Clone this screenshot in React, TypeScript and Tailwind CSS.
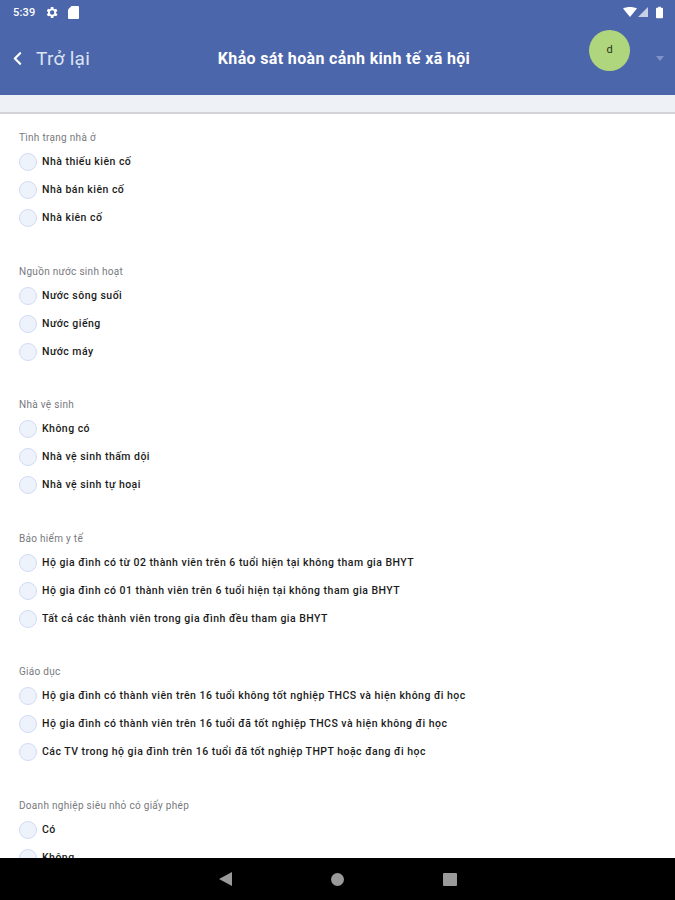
import { ChevronLeft } from 'lucide-react';

const SECTIONS = [
  { title: 'Tình trạng nhà ở', options: ['Nhà thiếu kiên cố', 'Nhà bán kiên cố', 'Nhà kiên cố'] },
  { title: 'Nguồn nước sinh hoạt', options: ['Nước sông suối', 'Nước giếng', 'Nước máy'] },
  { title: 'Nhà vệ sinh', options: ['Không có', 'Nhà vệ sinh thấm dội', 'Nhà vệ sinh tự hoại'] },
  {
    title: 'Bảo hiểm y tế',
    options: [
      'Hộ gia đình có từ 02 thành viên trên 6 tuổi hiện tại không tham gia BHYT',
      'Hộ gia đình có 01 thành viên trên 6 tuổi hiện tại không tham gia BHYT',
      'Tất cả các thành viên trong gia đình đều tham gia BHYT',
    ],
  },
  {
    title: 'Giáo dục',
    options: [
      'Hộ gia đình có thành viên trên 16 tuổi không tốt nghiệp THCS và hiện không đi học',
      'Hộ gia đình có thành viên trên 16 tuổi đã tốt nghiệp THCS và hiện không đi học',
      'Các TV trong hộ gia đình trên 16 tuổi đã tốt nghiệp THPT hoặc đang đi học',
    ],
  },
  { title: 'Doanh nghiệp siêu nhỏ có giấy phép', options: ['Có', 'Không'] },
];

function StatusBar() {
  return (
    <div className="flex h-6 items-center justify-between pl-[13px] pr-[12px] text-white">
      <div className="flex items-center gap-[9px]">
        <span className="text-[11px] font-medium leading-none tracking-[0.2px]">5:39</span>
        <svg width="15" height="15" viewBox="0 0 24 24" fill="currentColor">
          <path
            fillRule="evenodd"
            d="M19.4 13a7.5 7.5 0 0 0 0-2l2.100-1.600-2-3.500-2.500 1a7.600 7.600 0 0 0-1.700-1L15 3.200h-4l-.4 2.700a7.600 7.600 0 0 0-1.700 1l-2.500-1-2 3.500L6.500 11a7.500 7.500 0 0 0 0 2l-2.100 1.600 2 3.500 2.500-1a7.600 7.600 0 0 0 1.700 1l.4 2.700h4l.4-2.700a7.600 7.600 0 0 0 1.700-1l2.500 1 2-3.500zM13 15.500a3.500 3.500 0 1 1 0-7 3.500 3.500 0 0 1 0 7z"
          />
        </svg>
        <svg width="11" height="13" viewBox="0 0 11 13" fill="currentColor">
          <path d="M3.500 0H10a1 1 0 0 1 1 1v11a1 1 0 0 1-1 1H1a1 1 0 0 1-1-1V3.500z" />
        </svg>
      </div>
      <div className="flex items-center gap-[8px]">
        <div className="flex items-end gap-[1px]">
          <svg width="14" height="10" viewBox="0 0 14 10" fill="currentColor">
            <path d="M0 1.500C4 -0.500 10 -0.500 14 1.500L7 10z" />
          </svg>
          <svg width="10" height="10" viewBox="0 0 10 10" fill="currentColor" fillOpacity="0.7">
            <path d="M10 0v10H0z" />
          </svg>
        </div>
        <svg width="7" height="13" viewBox="0 0 8 13" fill="currentColor">
          <path d="M2.500 0h3v1.200h1.500a1 1 0 0 1 1 1V12a1 1 0 0 1-1 1H1a1 1 0 0 1-1-1V2.200a1 1 0 0 1 1-1h1.500z" />
        </svg>
      </div>
    </div>
  );
}

function Header() {
  return (
    <header className="h-[95px] shrink-0 bg-[#4c66ab]">
      <StatusBar />
      <div className="flex h-[69px] items-center pl-[7px] pr-[11px]">
        <div className="flex w-[197px] items-center gap-[8px]">
          <ChevronLeft size={21} strokeWidth={2.6} className="text-white" />
          <span className="text-[19px] leading-none tracking-[0.3px] text-[#dbe3f4]">Trở lại</span>
        </div>
        <h1 className="w-[280px] text-center text-[16px] font-bold leading-none tracking-[0.35px] text-white">
          Khảo sát hoàn cảnh kinh tế xã hội
        </h1>
        <div className="ml-auto flex items-center gap-[26px]">
          <div className="-mt-[16px] flex h-[41px] w-[41px] items-center justify-center rounded-full bg-[#afd67c] text-[11px] text-[#26331a]">
            d
          </div>
          <div className="h-0 w-0 border-x-[4px] border-t-[5px] border-x-transparent border-t-[#7f94c6]" />
        </div>
      </div>
    </header>
  );
}

function Section({ title, options }: { title: string; options: string[] }) {
  return (
    <section className="mb-[37.6px]">
      <p className="mb-[8px] h-[14px] text-[10px] leading-[14px] tracking-[0.3px] text-[#77797d]">{title}</p>
      <div className="flex flex-col gap-[10px]">
        {options.map((option) => (
          <label key={option} className="flex h-[18px] items-start gap-[5px]">
            <span className="h-[18px] w-[18px] shrink-0 rounded-full border border-[#cfdcf5] bg-[#eef2fa]" />
            <span className="mt-[2px] text-[10.5px] font-medium leading-[14px] tracking-[0.47px] text-[#1b1b1b]">{option}</span>
          </label>
        ))}
      </div>
    </section>
  );
}

function NavBar() {
  return (
    <nav className="flex h-[42px] shrink-0 items-center justify-center gap-[99px] bg-black">
      <div className="h-0 w-0 border-y-[7.5px] border-r-[13px] border-y-transparent border-r-[#9a9a9a]" />
      <div className="h-[13px] w-[13px] rounded-full bg-[#9a9a9a]" />
      <div className="h-[13px] w-[14px] rounded-[1px] bg-[#9a9a9a]" />
    </nav>
  );
}

export default function App() {
  return (
    <div className="flex h-[900px] w-[675px] flex-col overflow-hidden bg-white font-['Roboto',sans-serif]">
      <Header />
      <div className="h-[19px] shrink-0 border-b-2 border-[#d2d4d8] bg-[#eef1f6]" />
      <main className="min-h-0 flex-1 overflow-hidden px-[19px] pt-[17px]">
        {SECTIONS.map((section) => (
          <Section key={section.title} title={section.title} options={section.options} />
        ))}
      </main>
      <NavBar />
    </div>
  );
}
